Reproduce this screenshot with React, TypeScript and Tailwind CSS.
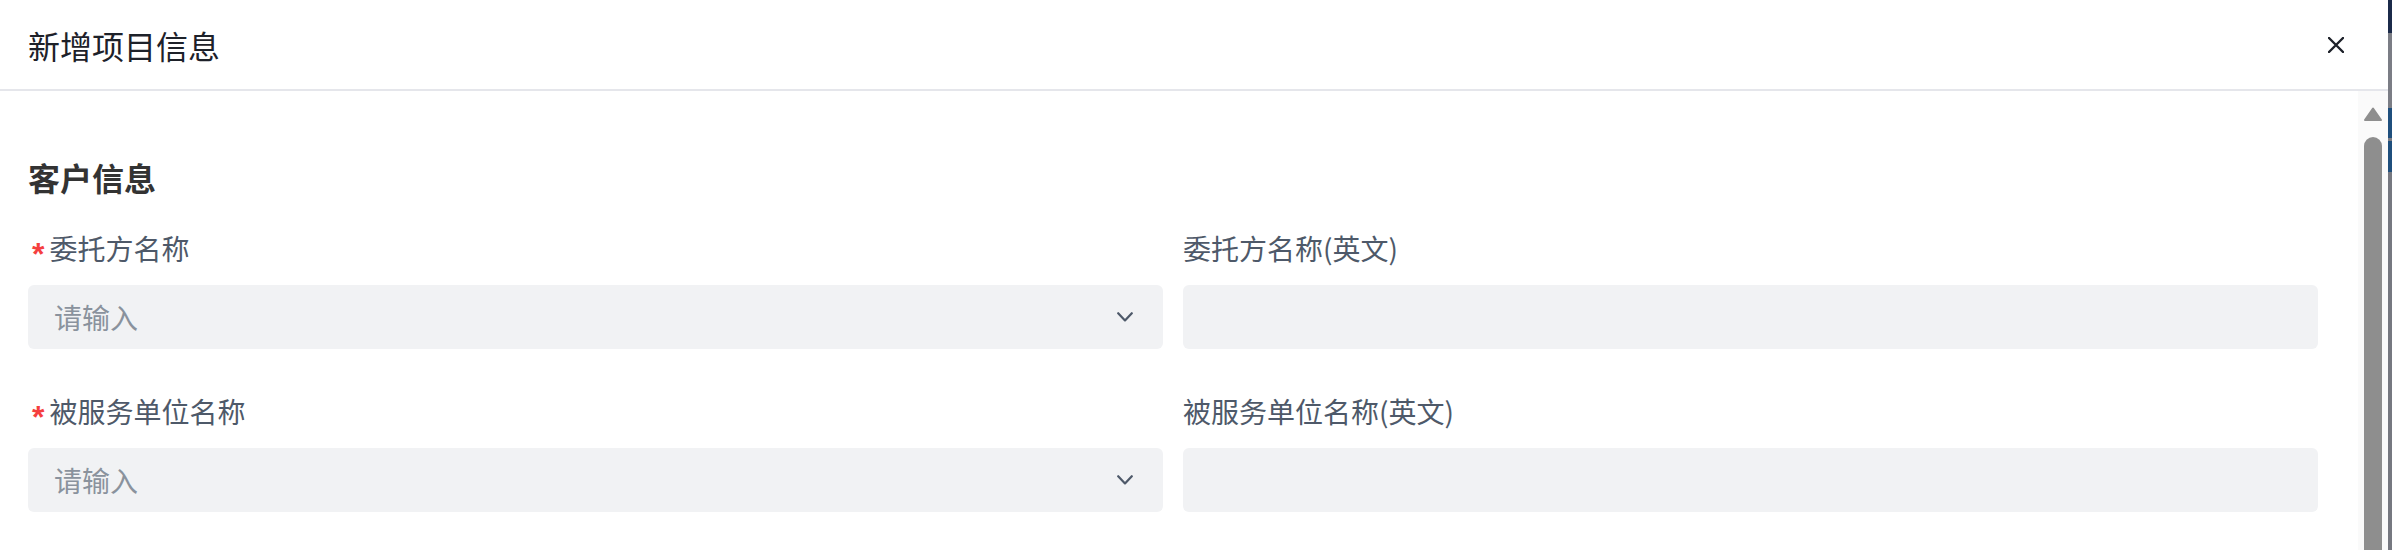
const font = { fontFamily: '"Noto Sans CJK SC", "Noto Sans", sans-serif' };

function Field({
  label,
  required,
  placeholder,
  select,
}: {
  label: string;
  required?: boolean;
  placeholder?: string;
  select?: boolean;
}) {
  return (
    <div className="flex flex-col">
      <div className="flex items-center text-[28px] leading-[28px] text-[#4e5969] mb-[23px]">
        {required && (
          <span
            className="relative top-[6px] text-[#f53f3f] text-[32px] font-bold leading-[28px] mr-[5px] pl-[4px]"
            style={{ fontFamily: '"Liberation Sans", sans-serif' }}
          >
            *
          </span>
        )}
        {label}
      </div>
      <div className="h-[64px] rounded-[6px] bg-[#f1f2f4] flex items-center pl-[26px] pr-[30px]">
        <span className="flex-1 text-[28px] text-[#8a929d]">{placeholder}</span>
        {select && (
          <svg width="16" height="10" viewBox="0 0 16 10" className="text-[#4e5969]">
            <path
              d="M1.2 1.2L8 8.4L14.8 1.2"
              fill="none"
              stroke="currentColor"
              strokeWidth="2.2"
              strokeLinecap="round"
              strokeLinejoin="round"
            />
          </svg>
        )}
      </div>
    </div>
  );
}

export default function App() {
  return (
    <div className="flex w-[2392px] h-[550px] overflow-hidden bg-white" style={font}>
      <div className="flex flex-col w-[2388px] h-full">
        <div className="h-[91px] shrink-0 flex items-center justify-between pl-[28px] pr-[44px] border-b-2 border-[#e5e6eb]">
          <h1 className="text-[32px] leading-[32px] text-[#1d2129]">新增项目信息</h1>
          <svg width="16" height="16" viewBox="0 0 16 16" className="text-[#1d2129]">
            <path d="M1 1L15 15M15 1L1 15" stroke="currentColor" strokeWidth="2.4" strokeLinecap="round" />
          </svg>
        </div>
        <div className="flex flex-1 min-h-0">
          <div className="flex-1 pl-[28px] pr-[40px] pt-[70px]">
            <h2 className="text-[32px] leading-[32px] font-bold text-[#333333] mb-[41px]">客户信息</h2>
            <div className="grid grid-cols-2 gap-x-[20px] gap-y-[48px]">
              <Field label="委托方名称" required placeholder="请输入" select />
              <Field label="委托方名称(英文)" />
              <Field label="被服务单位名称" required placeholder="请输入" select />
              <Field label="被服务单位名称(英文)" />
            </div>
          </div>
          {/* scrollbar */}
          <div className="w-[30px] shrink-0 bg-[#fafafa] flex flex-col items-center pt-[16px]">
            <svg width="18" height="14" viewBox="0 0 18 14">
              <path d="M9 1.5L17 13H1Z" fill="#8e8e8e" stroke="#8e8e8e" strokeLinejoin="round" strokeWidth="2" />
            </svg>
            <div className="mt-[16px] w-[18px] flex-1 rounded-t-[9px] bg-[#8e8e8e]" />
          </div>
        </div>
      </div>
      <div className="w-[4px] flex flex-col">
        <div className="h-[33px] bg-[#1b2a4a]" />
        <div className="h-[75px] bg-[#7b7d85]" />
        <div className="h-[30px] bg-[#1f4f7d]" />
        <div className="h-[3px] bg-[#7b7d85]" />
        <div className="h-[31px] bg-[#1f4f7d]" />
        <div className="flex-1 bg-[#767880]" />
      </div>
    </div>
  );
}
